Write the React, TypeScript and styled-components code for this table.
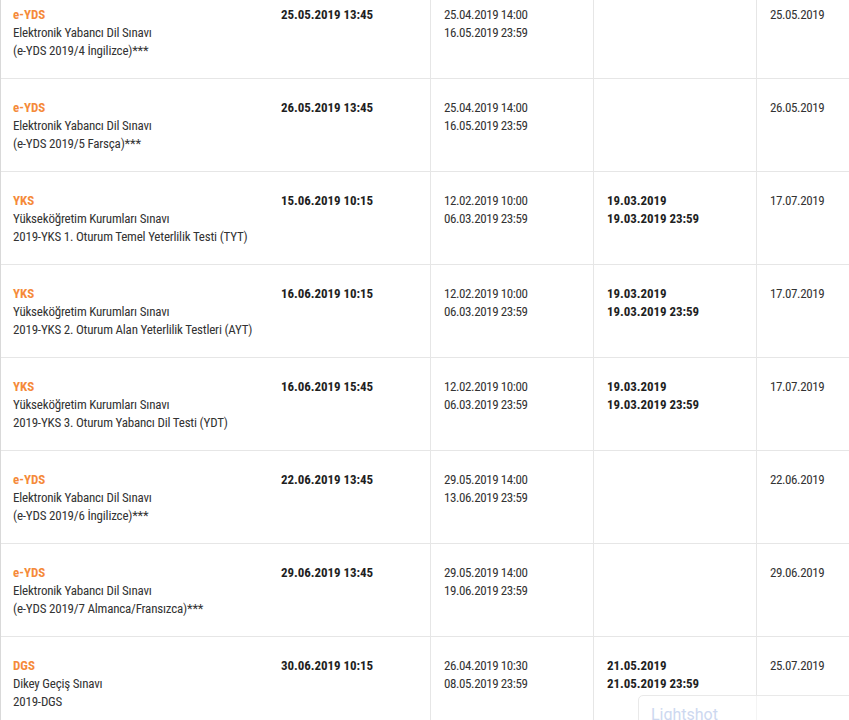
import React from "react";
import styled, { createGlobalStyle } from "styled-components";

const Global = createGlobalStyle`
  html, body { margin: 0; padding: 0; background: #fff; }
  body { overflow: hidden; }
`;

const Page = styled.div`
  position: relative;
  width: 849px;
  height: 720px;
  overflow: hidden;
  font-family: Roboto, "Liberation Sans", Arial, sans-serif;
  font-stretch: 75%;
  font-size: 13px;
  line-height: 18px;
  color: #333;
`;

const Table = styled.div`
  margin-top: -14px;
  border-left: 1px solid #d9d9d9;
`;

const Row = styled.div`
  display: grid;
  grid-template-columns: 267px 162px 163px 163px 1fr;
  height: 93px;
  box-sizing: border-box;
  border-bottom: 1px solid #e6e6e6;
`;

const Cell = styled.div<{ $divider?: boolean; $first?: boolean }>`
  padding: 20px 13px 0 ${(p) => (p.$first ? "12px" : "13px")};
  box-sizing: border-box;
  border-left: ${(p) => (p.$divider ? "1px solid #e6e6e6" : "none")};
  white-space: nowrap;
`;

const ExamCode = styled.div`
  color: #f58a3a;
  font-weight: 700;
  letter-spacing: 0;
`;

const Text = styled.div`
  letter-spacing: -0.2px;
  color: #333;
`;

const DateText = styled.div<{ $bold?: boolean }>`
  font-weight: ${(p) => (p.$bold ? 700 : 400)};
  letter-spacing: ${(p) => (p.$bold ? "-0.05px" : "-0.4px")};
  color: ${(p) => (p.$bold ? "#1f1f1f" : "#333")};
`;

const Overlay = styled.div`
  position: absolute;
  left: 638px;
  top: 695px;
  width: 240px;
  height: 60px;
  box-sizing: border-box;
  border: 1px solid #e9e9e9;
  border-radius: 5px;
  background: rgba(255, 255, 255, 0.55);
  padding: 9px 12px;
  font-family: Roboto, "Liberation Sans", sans-serif;
  font-stretch: 100%;
  font-size: 16px;
  line-height: 20px;
  color: #cdd8f0;
`;

type Exam = {
  code: string;
  name: string;
  detail: string;
  date: string;
  apply: [string, string];
  late?: [string, string];
  result: string;
};

const exams: Exam[] = [
  { code: "e-YDS", name: "Elektronik Yabancı Dil Sınavı", detail: "(e-YDS 2019/4 İngilizce)***", date: "25.05.2019 13:45", apply: ["25.04.2019 14:00", "16.05.2019 23:59"], result: "25.05.2019" },
  { code: "e-YDS", name: "Elektronik Yabancı Dil Sınavı", detail: "(e-YDS 2019/5 Farsça)***", date: "26.05.2019 13:45", apply: ["25.04.2019 14:00", "16.05.2019 23:59"], result: "26.05.2019" },
  { code: "YKS", name: "Yükseköğretim Kurumları Sınavı", detail: "2019-YKS 1. Oturum Temel Yeterlilik Testi (TYT)", date: "15.06.2019 10:15", apply: ["12.02.2019 10:00", "06.03.2019 23:59"], late: ["19.03.2019", "19.03.2019 23:59"], result: "17.07.2019" },
  { code: "YKS", name: "Yükseköğretim Kurumları Sınavı", detail: "2019-YKS 2. Oturum Alan Yeterlilik Testleri (AYT)", date: "16.06.2019 10:15", apply: ["12.02.2019 10:00", "06.03.2019 23:59"], late: ["19.03.2019", "19.03.2019 23:59"], result: "17.07.2019" },
  { code: "YKS", name: "Yükseköğretim Kurumları Sınavı", detail: "2019-YKS 3. Oturum Yabancı Dil Testi (YDT)", date: "16.06.2019 15:45", apply: ["12.02.2019 10:00", "06.03.2019 23:59"], late: ["19.03.2019", "19.03.2019 23:59"], result: "17.07.2019" },
  { code: "e-YDS", name: "Elektronik Yabancı Dil Sınavı", detail: "(e-YDS 2019/6 İngilizce)***", date: "22.06.2019 13:45", apply: ["29.05.2019 14:00", "13.06.2019 23:59"], result: "22.06.2019" },
  { code: "e-YDS", name: "Elektronik Yabancı Dil Sınavı", detail: "(e-YDS 2019/7 Almanca/Fransızca)***", date: "29.06.2019 13:45", apply: ["29.05.2019 14:00", "19.06.2019 23:59"], result: "29.06.2019" },
  { code: "DGS", name: "Dikey Geçiş Sınavı", detail: "2019-DGS", date: "30.06.2019 10:15", apply: ["26.04.2019 10:30", "08.05.2019 23:59"], late: ["21.05.2019", "21.05.2019 23:59"], result: "25.07.2019" },
];

export default function App() {
  return (
    <Page>
      <Global />
      <Table>
        {exams.map((e, i) => (
          <Row key={i}>
            <Cell $first>
              <ExamCode>{e.code}</ExamCode>
              <Text>{e.name}</Text>
              <Text>{e.detail}</Text>
            </Cell>
            <Cell>
              <DateText $bold>{e.date}</DateText>
            </Cell>
            <Cell $divider>
              <DateText>{e.apply[0]}</DateText>
              <DateText>{e.apply[1]}</DateText>
            </Cell>
            <Cell $divider>
              {e.late && (
                <>
                  <DateText $bold>{e.late[0]}</DateText>
                  <DateText $bold>{e.late[1]}</DateText>
                </>
              )}
            </Cell>
            <Cell $divider>
              <DateText>{e.result}</DateText>
            </Cell>
          </Row>
        ))}
      </Table>
      <Overlay>Lightshot</Overlay>
    </Page>
  );
}
